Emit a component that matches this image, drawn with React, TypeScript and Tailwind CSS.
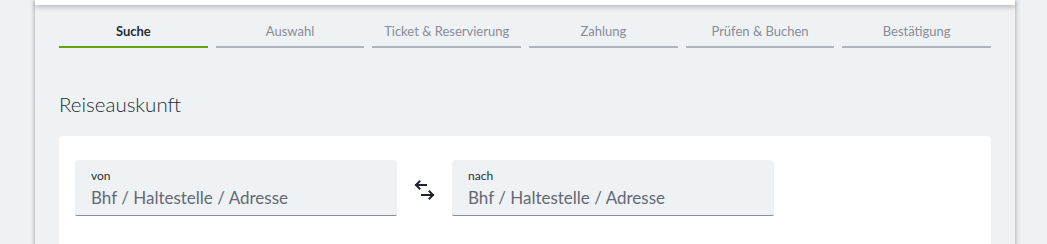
import React from "react";

const steps = [
  "Suche",
  "Auswahl",
  "Ticket & Reservierung",
  "Zahlung",
  "Prüfen & Buchen",
  "Bestätigung",
];

function SwapIcon() {
  return (
    <svg width="22" height="20" viewBox="0 0 22 20" fill="none" stroke="#1f232b" strokeWidth={2} strokeLinecap="square">
      <path d="M2 5h10" />
      <path d="M5.5 1.5L2 5l3.5 3.5" />
      <path d="M8 15h11" />
      <path d="M15.5 11.5L19 15l-3.5 3.5" />
    </svg>
  );
}

function StationField({ label }: { label: string }) {
  return (
    <div className="w-[322px] h-[56px] rounded-t-[4px] rounded-b-[2px] bg-[#eff2f5] border-b border-[#878c96] px-4 pt-[9px]">
      <div className="text-[12px] leading-[14px] text-[#282d37]">{label}</div>
      <div className="text-[17px] leading-[24px] mt-[3px] text-[#646973]">Bhf / Haltestelle / Adresse</div>
    </div>
  );
}

export default function App() {
  return (
    <div className="min-h-screen bg-[#eff2f5] font-['Lato',sans-serif]">
      <div className="ml-[35px] w-[980px] min-h-[244px] bg-[#eff2f5] shadow-[0_0_5px_rgba(0,0,0,0.35)]">
        <div className="h-[5px] bg-white shadow-[0_2px_5px_rgba(0,0,0,0.25)]" />
        <div className="px-6">
          <nav className="flex gap-2 pt-[16px]">
            {steps.map((step, i) => (
              <div
                key={step}
                className={
                  "flex-1 text-center text-[13px] leading-[20px] pb-[5px] border-b-2 " +
                  (i === 0
                    ? "font-bold text-[#282d37] border-[#63a615]"
                    : "text-[#878c96] border-[#afb4bb]")
                }
              >
                {step}
              </div>
            ))}
          </nav>
          <h1 className="mt-[42px] text-[20.5px] leading-[28px] font-light text-[#282d37]">Reiseauskunft</h1>
          <div className="mt-[18px] bg-white rounded-[4px] px-4 pt-6 pb-10">
            <div className="flex items-center">
              <StationField label="von" />
              <div className="w-[55px] flex justify-center pt-1">
                <SwapIcon />
              </div>
              <StationField label="nach" />
            </div>
          </div>
        </div>
      </div>
    </div>
  );
}
